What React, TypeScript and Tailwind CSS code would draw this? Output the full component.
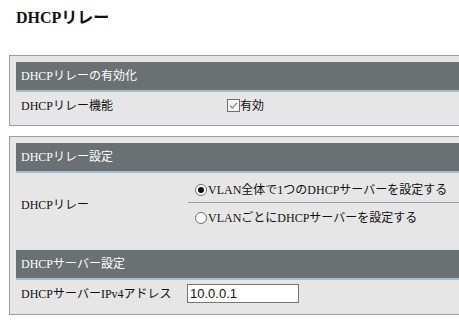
import React from "react";

const font = "font-['Liberation_Serif','Noto_Sans_CJK_JP',serif]";

function Header({ title }: { title: string }) {
  return (
    <div className="flex h-[30px] items-center border-b-2 border-[#a8bdcc] bg-[#6b7073] pl-[5px] text-[12px] text-white">
      {title}
    </div>
  );
}

function Radio({ checked }: { checked?: boolean }) {
  return (
    <span className="flex h-[12px] w-[12px] shrink-0 items-center justify-center rounded-full border border-[#6f6f6f] bg-white">
      {checked && <span className="h-[6px] w-[6px] rounded-full bg-[#111]" />}
    </span>
  );
}

function Checkbox() {
  return (
    <svg width="13" height="13" viewBox="0 0 13 13" className="shrink-0">
      <rect x="0.5" y="0.5" width="12" height="12" fill="#f4f4f4" stroke="#6f6f6f" />
      <path d="M3 6.5 L5.3 9 L10 3.8" fill="none" stroke="#8a8a8a" strokeWidth="1.2" />
    </svg>
  );
}

export default function App() {
  return (
    <div className={`h-[322px] w-[459px] overflow-hidden bg-white text-[#111] ${font}`}>
      <h1 className="pl-[16px] pt-[8px] text-[16px] font-bold leading-[20px]">DHCPリレー</h1>

      <div className="ml-[9px] mt-[27px] w-[480px] border border-[#9a9fa3] bg-[#e6e6e6] p-[6px]">
        <Header title="DHCPリレーの有効化" />
        <div className="flex h-[27px] items-center text-[12px]">
          <div className="w-[211px] pl-[5px]">DHCPリレー機能</div>
          <Checkbox />
          <span>有効</span>
        </div>
      </div>

      <div className="ml-[9px] mt-[10px] w-[480px] border border-[#9a9fa3] bg-[#e6e6e6] p-[6px] pb-[7px]">
        <Header title="DHCPリレー設定" />
        <div className="flex text-[12px]">
          <div className="flex w-[172px] items-center pl-[5px] pt-[3px]">DHCPリレー</div>
          <div className="flex-1">
            <div className="flex h-[30px] items-center gap-[1px] border-b border-[#9a9fa3] pl-[7px] pt-[5px]">
              <Radio checked />
              <span>VLAN全体で1つのDHCPサーバーを設定する</span>
            </div>
            <div className="flex h-[30px] items-center gap-[1px] pl-[7px]">
              <Radio />
              <span>VLANごとにDHCPサーバーを設定する</span>
            </div>
          </div>
        </div>
        <div className="mt-[17px]">
          <Header title="DHCPサーバー設定" />
        </div>
        <div className="flex h-[27px] items-center text-[12px]">
          <div className="w-[171px] pl-[5px]">DHCPサーバーIPv4アドレス</div>
          <input
            defaultValue="10.0.0.1"
            className="h-[19px] w-[112px] border border-[#767676] bg-white px-[2px] font-['Liberation_Sans',sans-serif] text-[13px] text-[#111] outline-none"
          />
        </div>
      </div>
    </div>
  );
}
